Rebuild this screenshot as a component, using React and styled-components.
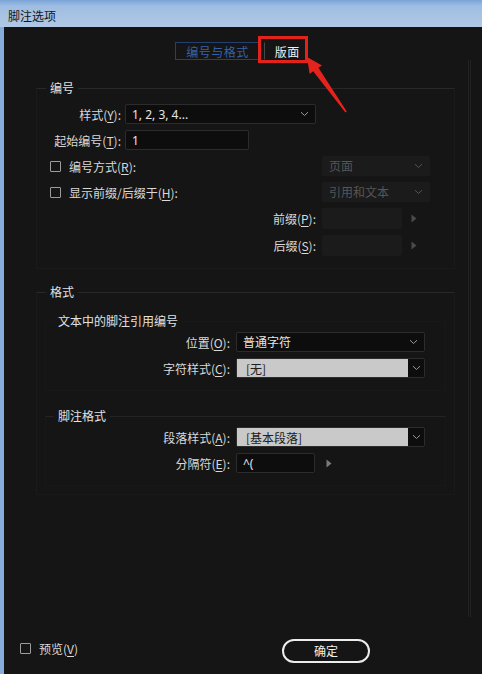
import React from "react";
import styled, { createGlobalStyle } from "styled-components";

const GlobalStyle = createGlobalStyle`
  * { box-sizing: border-box; }
  body {
    margin: 0;
    background: #151515;
    font-family: "Noto Sans", "Noto Sans CJK SC", sans-serif;
    font-size: 12px;
  }
`;

function Chevron() {
  return (
    <svg width="9" height="6" viewBox="0 0 9 6">
      <path d="M1 1.2 L4.5 4.5 L8 1.2" fill="none" stroke="#9a9a9a" strokeWidth="1" />
    </svg>
  );
}

function Play({ color }) {
  return (
    <svg width="6" height="9" viewBox="0 0 6 9">
      <path d="M0.5 0.5 L5.5 4.5 L0.5 8.5 Z" fill={color} />
    </svg>
  );
}

export default function App() {
  return (
    <Window>
      <GlobalStyle />
      <TitleBar>脚注选项</TitleBar>
      <Body>
        <Tabs>
          <Tab active>编号与格式</Tab>
          <Tab divider>版面</Tab>
        </Tabs>

        <Panel>
          <Group>
            <Legend>编号</Legend>
            <FieldRow>
              <Label>样式(<u>Y</u>):</Label>
              <Select width={191}>
                <span>1, 2, 3, 4...</span>
                <Chevron />
              </Select>
            </FieldRow>
            <FieldRow>
              <Label>起始编号(<u>T</u>):</Label>
              <Input width={124}>1</Input>
            </FieldRow>
            <SideRow>
              <Check>
                <Box />
                <span>编号方式(<u>R</u>):</span>
              </Check>
              <Select disabled width={108}>
                <span>页面</span>
                <Chevron />
              </Select>
            </SideRow>
            <SideRow>
              <Check>
                <Box />
                <span>显示前缀/后缀于(<u>H</u>):</span>
              </Check>
              <Select disabled width={108}>
                <span>引用和文本</span>
                <Chevron />
              </Select>
            </SideRow>
            <SideRow tall>
              <Label>前缀(<u>P</u>):</Label>
              <Combo>
                <Input disabled width={80} />
                <Play color="#4a4a4a" />
              </Combo>
            </SideRow>
            <SideRow tall>
              <Label>后缀(<u>S</u>):</Label>
              <Combo>
                <Input disabled width={80} />
                <Play color="#4a4a4a" />
              </Combo>
            </SideRow>
          </Group>

          <Group second>
            <Legend>格式</Legend>
            <SubGroup>
              <SubLegend>文本中的脚注引用编号</SubLegend>
              <SubRow>
                <Label>位置(<u>O</u>):</Label>
                <Select width={189}>
                  <span>普通字符</span>
                  <Chevron />
                </Select>
              </SubRow>
              <SubRow>
                <Label>字符样式(<u>C</u>):</Label>
                <StyleField>
                  <StyleValue>[无]</StyleValue>
                  <StyleButton><Chevron /></StyleButton>
                </StyleField>
              </SubRow>
            </SubGroup>
            <SubGroup last>
              <SubLegend>脚注格式</SubLegend>
              <SubRow>
                <Label>段落样式(<u>A</u>):</Label>
                <StyleField>
                  <StyleValue>[基本段落]</StyleValue>
                  <StyleButton><Chevron /></StyleButton>
                </StyleField>
              </SubRow>
              <SubRow>
                <Label>分隔符(<u>E</u>):</Label>
                <Combo wide>
                  <Input width={79}>^(</Input>
                  <Play color="#7a7a7a" />
                </Combo>
              </SubRow>
            </SubGroup>
          </Group>
        </Panel>

        <Footer>
          <Check>
            <Box />
            <span>预览(<u>V</u>)</span>
          </Check>
          <OkButton>确定</OkButton>
        </Footer>
      </Body>

      <Callout />
      <Arrow width="482" height="674" viewBox="0 0 482 674">
        <polygon
          points="307,57 322,65.5 318.4,67.8 346.8,111.6 345.4,112.6 313.2,71.2 309.6,74"
          fill="#e4231d"
        />
      </Arrow>
    </Window>
  );
}

const Window = styled.div`
  position: relative;
  width: 482px;
  height: 674px;
  display: flex;
  flex-direction: column;
  overflow: hidden;
`;

const TitleBar = styled.div`
  height: 27px;
  padding: 3px 0 0 8px;
  display: flex;
  align-items: center;
  background: linear-gradient(#79a4d8 0px, #9fbde2 6px, #b0c8e4 27px);
  color: #141414;
  font-family: "Noto Sans CJK SC", sans-serif;
  font-size: 12px;
`;

const Body = styled.div`
  flex: 1;
  display: flex;
  flex-direction: column;
  border-left: 4px solid #86acdc;
  background: #151515;
  color: #d9d9d9;
`;

const Tabs = styled.div`
  display: flex;
  justify-content: center;
  gap: 4px;
  padding-top: 15px;
  height: 33px;
`;

const Tab = styled.div`
  height: 18px;
  padding: 0 10px;
  display: flex;
  align-items: center;
  justify-content: center;
  border: 1px solid ${p => (p.active ? "#23406e" : "transparent")};
  border-left-color: ${p => (p.active ? "#23406e" : p.divider ? "#474747" : "transparent")};
  color: ${p => (p.active ? "#3562ab" : "#f2f2f2")};
  font-family: "Noto Sans CJK SC", sans-serif;
  font-size: 12px;
  letter-spacing: 0.5px;
`;

const Panel = styled.div`
  height: 557px;
  margin: 0 11px 0 8px;
  padding: 20px 13px 0 24px;
  border-right: 3px double #222222;
`;

const Group = styled.fieldset`
  margin: ${p => (p.second ? "15px 0 0" : "0")};
  padding: ${p => (p.second ? "13px 0 8px" : "8px 0 12px")};
  border: 1px solid #1a1a1a;
  border-top-color: #282828;
  display: flex;
  flex-direction: column;
  gap: 6px;
  min-width: 0;
`;

const Legend = styled.legend`
  margin-left: 9px;
  padding: 0 4px;
  height: 16px;
  line-height: 16px;
  color: #e2e2e2;
  font-family: "Noto Sans CJK SC", sans-serif;
  font-size: 12px;
`;

const SubGroup = styled.fieldset`
  margin: 0 8px ${p => (p.last ? "0" : "11px")};
  padding: 3px 21px 12px 0;
  border: 1px solid #181818;
  border-top-color: ${p => (p.last ? "#242424" : "#181818")};
  display: flex;
  flex-direction: column;
  gap: 6px;
  min-width: 0;
`;

const SubLegend = styled(Legend)`
  margin-left: 8px;
  padding: 0 4px;
`;

const Label = styled.span`
  text-align: right;
  white-space: nowrap;
  font-family: "Noto Sans CJK SC", sans-serif;
  font-size: 12px;
  color: #d9d9d9;

  u { text-underline-offset: 2px; }
`;

const FieldRow = styled.div`
  display: grid;
  grid-template-columns: 84px auto;
  column-gap: 4px;
  align-items: center;
  justify-items: start;
  height: 20px;
  ${Label} { justify-self: end; }
`;

const SideRow = styled.div`
  display: grid;
  grid-template-columns: 1fr 108px;
  column-gap: 6px;
  align-items: center;
  height: ${p => (p.tall ? "21px" : "20px")};
  padding: 0 24px 0 13px;
`;

const SubRow = styled.div`
  display: grid;
  grid-template-columns: 184px 189px;
  column-gap: 6px;
  align-items: center;
  height: 20px;
`;

const Select = styled.div`
  width: ${p => p.width}px;
  height: 20px;
  padding: 0 6px;
  display: flex;
  align-items: center;
  justify-content: space-between;
  background: ${p => (p.disabled ? "#1b1b1b" : "#0d0d0d")};
  border: 1px solid ${p => (p.disabled ? "#1b1b1b" : "#2c2c2c")};
  border-radius: 2px;
  color: ${p => (p.disabled ? "#565656" : "#e6e6e6")};
  font-family: "Noto Sans", "Noto Sans CJK SC", sans-serif;
  font-size: 12px;
  white-space: nowrap;

  svg { opacity: ${p => (p.disabled ? 0.45 : 1)}; }
`;

const Input = styled.div`
  width: ${p => p.width}px;
  height: 100%;
  min-height: 19px;
  padding: 0 6px;
  display: flex;
  align-items: center;
  background: ${p => (p.disabled ? "#1b1b1b" : "#0d0d0d")};
  border: 1px solid ${p => (p.disabled ? "#1b1b1b" : "#2c2c2c")};
  border-radius: 2px;
  color: #e6e6e6;
  font-family: "Noto Sans", "Noto Sans CJK SC", sans-serif;
  font-size: 12px;
`;

const Combo = styled.div`
  display: flex;
  align-items: center;
  gap: ${p => (p.wide ? "11px" : "9px")};
  height: 100%;
`;

const StyleField = styled.div`
  display: flex;
  height: 20px;
  border: 1px solid #2c2c2c;
  border-radius: 2px;
  background: #0d0d0d;
`;

const StyleValue = styled.div`
  width: 171px;
  padding-left: 9px;
  display: flex;
  align-items: center;
  background: #c9c9c9;
  color: #202020;
  font-family: "Noto Sans CJK SC", sans-serif;
  font-size: 12px;
`;

const StyleButton = styled.div`
  flex: 1;
  display: flex;
  align-items: center;
  justify-content: center;
`;

const Check = styled.label`
  display: flex;
  align-items: center;
  gap: 8px;
  white-space: nowrap;
  font-family: "Noto Sans CJK SC", sans-serif;
  font-size: 12px;
  color: #d9d9d9;

  u { text-underline-offset: 2px; }
`;

const Box = styled.span`
  width: 11px;
  height: 11px;
  border: 1px solid #9c9c9c;
  border-radius: 1px;
`;

const Footer = styled.div`
  flex: 1;
  display: flex;
  align-items: center;
  justify-content: space-between;
  padding: 6px 112px 0 16px;
`;

const OkButton = styled.button`
  width: 88px;
  height: 24px;
  margin-top: 4px;
  border: 2px solid #ececec;
  border-radius: 12px;
  background: transparent;
  color: #f2f2f2;
  font-family: "Noto Sans CJK SC", sans-serif;
  font-size: 12px;
`;

const Callout = styled.div`
  position: absolute;
  left: 258px;
  top: 36px;
  width: 50px;
  height: 27px;
  border: 3px solid #e3221c;
  pointer-events: none;
`;

const Arrow = styled.svg`
  position: absolute;
  left: 0;
  top: 0;
  pointer-events: none;
`;
